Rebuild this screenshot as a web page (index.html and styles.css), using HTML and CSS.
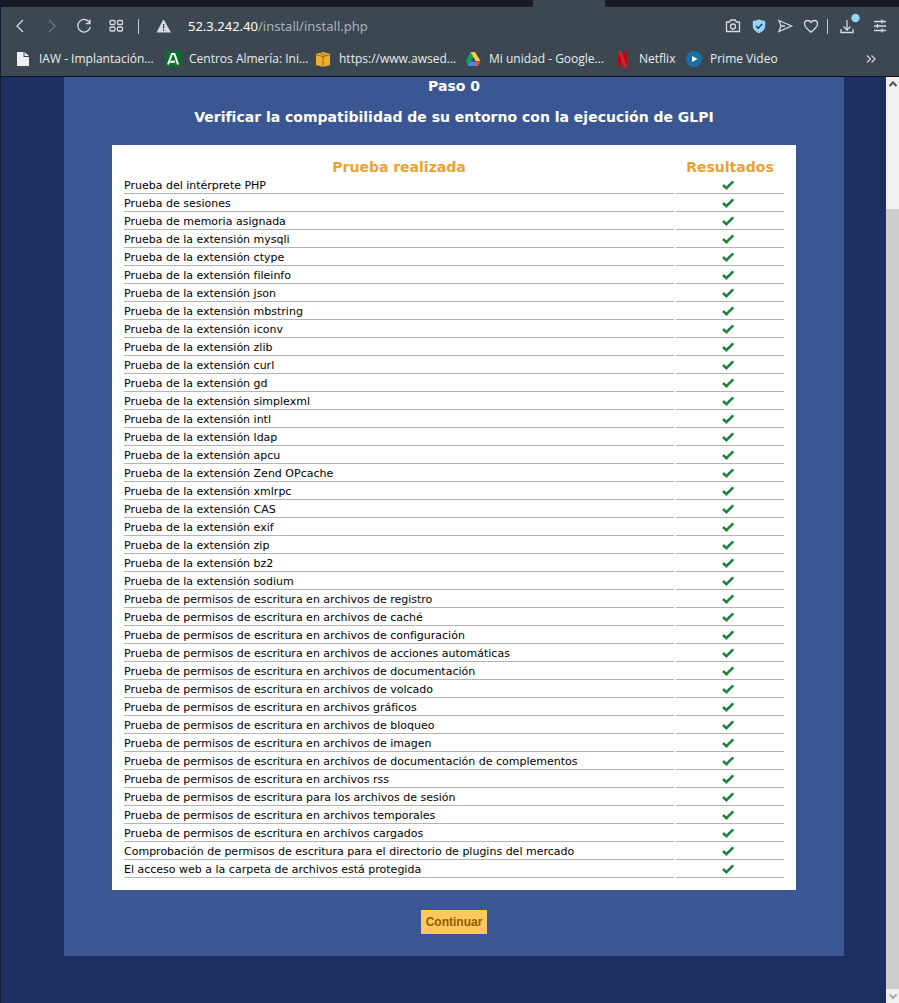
FILE: index.html
```html
<!DOCTYPE html>
<html lang="es">
<head>
<meta charset="utf-8">
<title>Setup GLPI</title>
<link rel="stylesheet" href="styles.css">
</head>
<body>
<svg class="defs" aria-hidden="true"><symbol id="ok" viewBox="0 0 12 10"><path d="M1 5l3.400 3.200L11.200 1.300" fill="none" stroke="#1c8238" stroke-width="2.500"/></symbol></svg>
<div class="window">
<div class="tabs"><div class="tab"></div></div>
<header class="chrome">
<div class="toolbar">
<div class="nav">
<button class="icon" aria-label="Atrás"><svg width="20" height="20" viewBox="0 0 20 20"><path d="M13 4L7 10l6 6"/></svg></button>
<button class="icon dim" aria-label="Adelante"><svg width="20" height="20" viewBox="0 0 20 20"><path d="M7 4l6 6-6 6"/></svg></button>
<button class="icon" aria-label="Recargar"><svg width="20" height="20" viewBox="0 0 20 20"><path d="M15.500 6.500A6.300 6.300 0 1 0 16.300 11M16 3.500v4h-4"/></svg></button>
<button class="icon" aria-label="Marcado rápido"><svg width="20" height="20" viewBox="0 0 20 20"><rect x="4" y="4.500" width="5" height="4" rx="1"/><rect x="11.500" y="4.500" width="5" height="4" rx="1"/><rect x="4" y="11" width="5" height="4" rx="1"/><rect x="11.500" y="11" width="5" height="4" rx="1"/></svg></button>
</div>
<span class="sep"></span>
<button class="icon warn" aria-label="No seguro"><svg width="20" height="20" viewBox="0 0 20 20"><path class="solid" d="M9 4h1l7 12.500H2.500z"/><path d="M9.600 8v4.500M9.600 13.500v1.600" stroke="#3c4751"/></svg></button>
<div class="url"><b>52.3.242.40</b>/install/install.php</div>
<div class="actions">
<button class="icon" aria-label="Captura"><svg width="20" height="20" viewBox="0 0 20 20"><path d="M3.500 6h3l1.500-2h4l1.500 2h3v9.500h-13z"/><circle cx="10" cy="10.500" r="2.500"/></svg></button>
<button class="icon" aria-label="Protección"><svg width="20" height="20" viewBox="0 0 20 20"><path d="M10 3.200c2.500 1.300 4 1.500 6.200 1.500v5.500c0 3.500-3 5.500-6.200 7-3.200-1.500-6.200-3.500-6.200-7V4.700c2.200 0 3.700-.200 6.200-1.500z" fill="#94d3fb" stroke="none"/><path d="M7 10l2.200 2.200L13.200 8" stroke="#293848" stroke-width="1.600"/></svg></button>
<button class="icon" aria-label="Enviar"><svg width="20" height="20" viewBox="0 0 20 20"><path d="M4 4.500L16.500 10 4 15.500 6 10zM6 10h4"/></svg></button>
<button class="icon" aria-label="Favorito"><svg width="20" height="20" viewBox="0 0 20 20"><path d="M10 16.200C5.500 12.500 3.500 10.500 3.500 8 3.500 5.800 5 4.500 6.800 4.500 8.300 4.500 9.400 5.400 10 6.500 10.600 5.400 11.700 4.500 13.200 4.500 15 4.500 16.500 5.800 16.500 8 16.500 10.500 14.500 12.500 10 16.200z"/></svg></button>
</div>
<span class="sep right"></span>
<div class="extras">
<button class="icon" aria-label="Descargas"><svg width="28" height="26" viewBox="0 0 28 26"><path d="M13 7v10M9.500 13.500L13 17l3.500-3.500M7 16v3.500h12V16"/><circle cx="21.500" cy="5" r="4.200" fill="#94d3fb" stroke="none"/></svg></button>
<button class="icon" aria-label="Ajustes"><svg width="20" height="20" viewBox="0 0 20 20"><path d="M4 5.500h12M4 10h12M4 14.500h12M12 3.500v4M7.500 8v4M12 12.500v4"/></svg></button>
</div>
</div>
<nav class="bookmarks">
<a href="#" class="b1"><svg width="16" height="16" viewBox="0 0 16 16"><path d="M2 1h6.500v5H14v9H2zM9.500 1L14 5H9.500z" fill="#eef0f2"/></svg>IAW - Implantación...</a>
<a href="#" class="b2"><svg width="16" height="16" viewBox="0 0 16 16"><path d="M0 0h16v16H0z" fill="#08702c"/><path d="M3 13.500L7 3h2.500l3.500 10.500M5.500 11l4.500-.500" fill="none" stroke="#fff" stroke-width="2"/></svg>Centros Almería: Ini...</a>
<a href="#" class="b3"><svg width="16" height="16" viewBox="0 0 16 16"><path d="M1 3l7-2 7 2v11l-7 2-7-2z" fill="#f0b02f"/><path d="M1.500 4L8 5.500 14.500 4M8 5.500V16M5 2l6 2.500" fill="none" stroke="#8a6a20"/></svg>https://www.awsed...</a>
<a href="#" class="b4"><svg width="16" height="16" viewBox="0 0 16 16"><path d="M5.500 1L1 10l2.500 5L8.500 6z" fill="#159f58"/><path d="M5.500 1h4.500L15.500 10h-4.800z" fill="#ffcc40"/><path d="M5.500 10.500h7L11 15H3z" fill="#4688f4"/><path d="M10.700 10.500h4.800L13 15h-2z" fill="#e3513a"/></svg>Mi unidad - Google...</a>
<a href="#" class="b5"><svg width="16" height="16" viewBox="0 0 16 16"><path d="M4.500 0v16M10.500 0v16" stroke="#b20a16" stroke-width="3"/><path d="M3 0h3l6 16H9z" fill="#e81b25"/></svg>Netflix</a>
<a href="#" class="b6"><svg width="16" height="16" viewBox="0 0 16 16"><circle cx="8" cy="8" r="8" fill="#176fa6"/><path d="M6 5l5.500 3L6 11z" fill="#fff"/></svg>Prime Video</a>
<button class="more" aria-label="Más marcadores"><svg width="10" height="10" viewBox="0 0 10 10"><path d="M1 1.500L4.500 5 1 8.500M5.500 1.500L9 5 5.500 8.500"/></svg></button>
</nav>
</header>
<div class="view">
<main class="page">
<section class="panel">
<h2>Paso 0</h2>
<h3>Verificar la compatibilidad de su entorno con la ejecución de GLPI</h3>
<div class="box">
<table class="checks">
<thead><tr><th>Prueba realizada</th><th class="res">Resultados</th></tr></thead>
<tbody>
<tr><td>Prueba del intérprete PHP</td><td><svg><use href="#ok"/></svg></td></tr>
<tr><td>Prueba de sesiones</td><td><svg><use href="#ok"/></svg></td></tr>
<tr><td>Prueba de memoria asignada</td><td><svg><use href="#ok"/></svg></td></tr>
<tr><td>Prueba de la extensión mysqli</td><td><svg><use href="#ok"/></svg></td></tr>
<tr><td>Prueba de la extensión ctype</td><td><svg><use href="#ok"/></svg></td></tr>
<tr><td>Prueba de la extensión fileinfo</td><td><svg><use href="#ok"/></svg></td></tr>
<tr><td>Prueba de la extensión json</td><td><svg><use href="#ok"/></svg></td></tr>
<tr><td>Prueba de la extensión mbstring</td><td><svg><use href="#ok"/></svg></td></tr>
<tr><td>Prueba de la extensión iconv</td><td><svg><use href="#ok"/></svg></td></tr>
<tr><td>Prueba de la extensión zlib</td><td><svg><use href="#ok"/></svg></td></tr>
<tr><td>Prueba de la extensión curl</td><td><svg><use href="#ok"/></svg></td></tr>
<tr><td>Prueba de la extensión gd</td><td><svg><use href="#ok"/></svg></td></tr>
<tr><td>Prueba de la extensión simplexml</td><td><svg><use href="#ok"/></svg></td></tr>
<tr><td>Prueba de la extensión intl</td><td><svg><use href="#ok"/></svg></td></tr>
<tr><td>Prueba de la extensión ldap</td><td><svg><use href="#ok"/></svg></td></tr>
<tr><td>Prueba de la extensión apcu</td><td><svg><use href="#ok"/></svg></td></tr>
<tr><td>Prueba de la extensión Zend OPcache</td><td><svg><use href="#ok"/></svg></td></tr>
<tr><td>Prueba de la extensión xmlrpc</td><td><svg><use href="#ok"/></svg></td></tr>
<tr><td>Prueba de la extensión CAS</td><td><svg><use href="#ok"/></svg></td></tr>
<tr><td>Prueba de la extensión exif</td><td><svg><use href="#ok"/></svg></td></tr>
<tr><td>Prueba de la extensión zip</td><td><svg><use href="#ok"/></svg></td></tr>
<tr><td>Prueba de la extensión bz2</td><td><svg><use href="#ok"/></svg></td></tr>
<tr><td>Prueba de la extensión sodium</td><td><svg><use href="#ok"/></svg></td></tr>
<tr><td>Prueba de permisos de escritura en archivos de registro</td><td><svg><use href="#ok"/></svg></td></tr>
<tr><td>Prueba de permisos de escritura en archivos de caché</td><td><svg><use href="#ok"/></svg></td></tr>
<tr><td>Prueba de permisos de escritura en archivos de configuración</td><td><svg><use href="#ok"/></svg></td></tr>
<tr><td>Prueba de permisos de escritura en archivos de acciones automáticas</td><td><svg><use href="#ok"/></svg></td></tr>
<tr><td>Prueba de permisos de escritura en archivos de documentación</td><td><svg><use href="#ok"/></svg></td></tr>
<tr><td>Prueba de permisos de escritura en archivos de volcado</td><td><svg><use href="#ok"/></svg></td></tr>
<tr><td>Prueba de permisos de escritura en archivos gráficos</td><td><svg><use href="#ok"/></svg></td></tr>
<tr><td>Prueba de permisos de escritura en archivos de bloqueo</td><td><svg><use href="#ok"/></svg></td></tr>
<tr><td>Prueba de permisos de escritura en archivos de imagen</td><td><svg><use href="#ok"/></svg></td></tr>
<tr><td>Prueba de permisos de escritura en archivos de documentación de complementos</td><td><svg><use href="#ok"/></svg></td></tr>
<tr><td>Prueba de permisos de escritura en archivos rss</td><td><svg><use href="#ok"/></svg></td></tr>
<tr><td>Prueba de permisos de escritura para los archivos de sesión</td><td><svg><use href="#ok"/></svg></td></tr>
<tr><td>Prueba de permisos de escritura en archivos temporales</td><td><svg><use href="#ok"/></svg></td></tr>
<tr><td>Prueba de permisos de escritura en archivos cargados</td><td><svg><use href="#ok"/></svg></td></tr>
<tr><td>Comprobación de permisos de escritura para el directorio de plugins del mercado</td><td><svg><use href="#ok"/></svg></td></tr>
<tr><td>El acceso web a la carpeta de archivos está protegida</td><td><svg><use href="#ok"/></svg></td></tr>
</tbody>
</table>
</div>
<button class="submit">Continuar</button>
</section>
</main>
<div class="scroll">
<svg width="13" height="14" viewBox="0 0 13 14"><path d="M3.500 9L7 5.500 10.500 9" fill="none" stroke="#505050" stroke-width="2"/></svg>
<div class="track"><div class="thumb"></div></div>
<svg width="13" height="14" viewBox="0 0 13 14"><path d="M3.500 5.500L7 9l3.500-3.500" fill="none" stroke="#a8a8a8" stroke-width="2"/></svg>
</div>
</div>
</div>
</body>
</html>
```
FILE: styles.css
```css
* { box-sizing: border-box; }
body { margin: 0; background: #1c2f63; font-family: Verdana, "DejaVu Sans", sans-serif; }
button { border: 0; padding: 0; background: none; }
.defs { position: absolute; width: 0; height: 0; }
.window { min-height: 100vh; display: flex; flex-direction: column; border-left: 1px solid #121c30; }
.tabs { height: 7px; background: #181b21; display: flex; padding-left: 532px; }
.tab { width: 72px; background: #3c4751; }
.chrome { background: #3c4751; border-bottom: 1px solid #0b1224; font-family: "Noto Sans", sans-serif; color: #e8ebee; }
.toolbar { height: 38px; display: flex; align-items: center; padding: 0 9px; }
.nav { display: flex; gap: 12px; }
.icon { display: flex; flex: none; }
.icon svg { fill: none; stroke: #d5dbe0; stroke-width: 1.3; }
.icon.dim svg { stroke: #69747e; }
.icon .solid { fill: #d5dbe0; stroke: none; }
.sep { width: 1px; height: 15px; background: #c4cad0; margin: 0 15px 0 12px; }
.url { flex: 1; font-size: 13px; line-height: 18px; color: #a8b3bc; margin-left: 14px; white-space: nowrap; }
.url b { font-weight: 400; color: #fff; }
.actions { display: flex; gap: 6px; }
.sep.right { margin: 0 6px; }
.extras { display: flex; align-items: center; gap: 8px; }
.bookmarks { height: 31px; display: flex; align-items: center; padding: 0 23px 4px 14px; }
.bookmarks a { display: flex; align-items: center; gap: 8px; color: inherit; text-decoration: none; font-family: "Open Sans", "Noto Sans", sans-serif; font-size: 12px; line-height: 18px; white-space: nowrap; flex: none; }
.b1 { width: 150px; }
.b2 { width: 150px; }
.b3 { width: 150px; }
.b4 { width: 150px; }
.b5 { width: 71px; }
.more { margin-left: auto; display: flex; }
.more svg { fill: none; stroke: #d5dbe0; stroke-width: 1.2; }
.view { flex: 1; display: flex; }
.page { flex: 1; padding: 0 42px 47px 63px; }
.panel { background: #3a5693; padding: 0 48px 22px; text-align: center; color: #fff; }
h2, h3 { margin: 0; font-size: 14px; line-height: 18px; font-weight: 700; }
h3 { margin: 13px 0 19px; }
.box { background: #fff; padding: 10px; color: #000; }
.checks { width: 100%; border-spacing: 2px; }
.checks th { height: 19px; padding: 2px 0 0; font-size: 14px; line-height: 17px; color: #eda22f; }
.checks .res { width: 108px; }
.checks td { height: 16px; padding: 1px 0 0; border-bottom: 1px solid #b4b4b4; font-size: 11px; line-height: 14px; text-align: left; }
.checks td + td { padding: 2px 4px 0 0; vertical-align: top; }
.checks svg { display: block; width: 12px; height: 10px; margin: 0 auto; }
.submit { margin: 20px 0 0; height: 24px; padding: 0 5px; background: #fec95c; color: #8f5a0a; font: bold 12px/24px "Liberation Sans", Arial, sans-serif; }
.scroll { width: 13px; background: #f0f0f0; display: flex; flex-direction: column; }
.scroll svg { flex: none; }
.track { flex: 1; display: flex; flex-direction: column; padding-top: 118px; }
.thumb { flex: 1; background: #cdcdcd; }
```
